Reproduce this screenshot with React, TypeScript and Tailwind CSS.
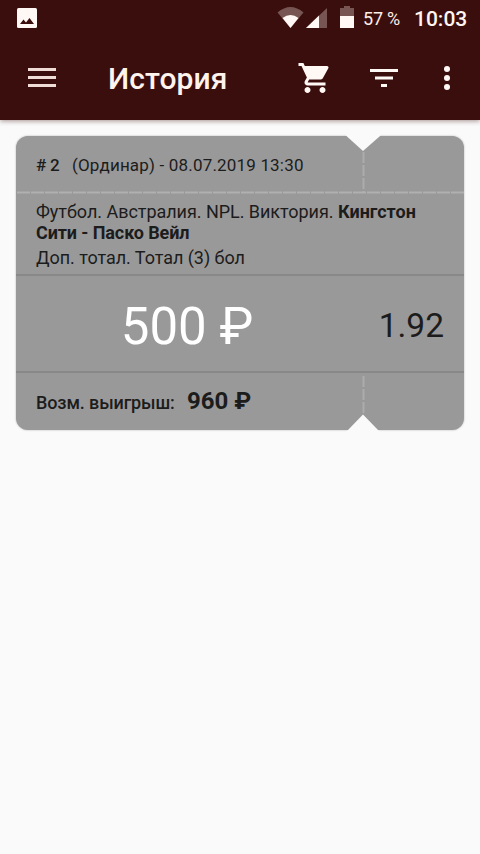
import type { ReactNode } from 'react'

const StatusBar = () => {
  return (
    <div className="flex h-9 items-center text-white">
      <svg className="ml-[17px] h-5 w-5" viewBox="0 0 20 20">
        <rect width="20" height="20" rx="1.5" fill="#fff8f5" />
        <path d="M3 16l3.5-4.5 2.5 3L12.5 10 17 16z" fill="#3a0e0c" />
      </svg>

      {/* Wifi, signal and battery */}
      <svg className="ml-[240px] h-6 w-20" viewBox="277 6 80 24">
        <path d="M277.5 12.5Q290.5 1.5 303.5 12.5L290.5 28z" fill="#765553" />
        <path d="M282.5 18Q290.5 12 298.5 18L290.5 28z" fill="#fff8f5" />
        <path d="M327 8v20h-21z" fill="#765553" />
        <path d="M319 15.6V28h-13z" fill="#fff8f5" />
        <path d="M344 6h6v2h4v9h-14V8h4z" fill="#765553" />
        <path d="M340 16h14v12h-14z" fill="#fff8f5" />
      </svg>

      <span className="ml-1.5 w-[51px] pt-0.5 text-[18px] leading-9 tracking-[-0.2px] whitespace-nowrap text-[#fceeea]">57 %</span>
      <span className="pt-0.5 text-[21px] leading-9 font-medium whitespace-nowrap text-[#fff6f3]">10:03</span>
    </div>
  )
}

const AppBar = () => {
  return (
    <div className="flex h-[84px] items-center">
      <button className="ml-7 flex w-7 flex-col gap-[5px] pb-px" aria-label="Menu">
        <span className="h-[3px] w-7 bg-[#efdcd6]" />
        <span className="h-[3px] w-7 bg-[#efdcd6]" />
        <span className="h-[3px] w-7 bg-[#efdcd6]" />
      </button>
      <h1 className="ml-[52px] w-[189px] pt-0.5 text-[30px] leading-9 font-medium tracking-[0.1px] whitespace-nowrap text-[#fff3ee]">История</h1>
      <svg className="h-9 w-9" viewBox="0 0 24 24" fill="#fff8f5">
        <path d="M7 18c-1.1 0-1.99.9-1.99 2S5.9 22 7 22s2-.9 2-2-.9-2-2-2zM1 2v2h2l3.6 7.59-1.35 2.45c-.16.28-.25.61-.25.96 0 1.1.9 2 2 2h12v-2H7.42c-.14 0-.25-.11-.25-.25l.03-.12.9-1.63h7.45c.75 0 1.41-.41 1.75-1.03l3.58-6.49A1 1 0 0 0 20 4H5.21l-.94-2H1zm16 16c-1.1 0-1.99.9-1.99 2s.89 2 1.99 2 2-.9 2-2-.9-2-2-2z" />
      </svg>
      <svg className="ml-[37px] h-[18px] w-7" viewBox="0 0 28 18" fill="#fff8f5">
        <path d="M0 0h28v3H0zM5 7.5h18v3H5zM11 15h6v3h-6z" />
      </svg>
      <div className="ml-[46px] flex flex-col gap-[3px]">
        <span className="size-1.5 rounded-full bg-[#fff8f5]" />
        <span className="size-1.5 rounded-full bg-[#fff8f5]" />
        <span className="size-1.5 rounded-full bg-[#fff8f5]" />
      </div>
    </div>
  )
}

const Ticket = ({ children }: { children: ReactNode }) => {
  return (
    <div className="relative mx-4 mt-4 h-[294px] rounded-[12px] bg-[#999999] text-[#1c1c1c] shadow-[0_0_2px_#aaaaaa]">
      {children}

      {/* Notches and tear line */}
      <svg className="absolute -top-1 left-0 h-[302px] w-[448px]" viewBox="0 -4 448 302">
        <path d="M327 -4L331 0.5 347 15 363.5 0.5 367 -4z" fill="#fafafa" />
        <path d="M327 298L332 294 347 278.5 362 294 367 298z" fill="#fafafa" />
        <path d="M347.5 16V56M347.5 240V278" stroke="#acacac" strokeWidth="2" strokeDasharray="11 2" />
        <path d="M1 56.5H448" stroke="#b0b0b0" strokeWidth="2" strokeDasharray="13 1" />
      </svg>
    </div>
  )
}

const App = () => {
  return (
    <div className="h-[854px] w-[480px] overflow-hidden bg-[#fafafa] font-[Roboto,sans-serif]">
      <header className="h-[120px] bg-[#3a0e0c] shadow-[0_1px_5px_rgba(58,14,12,0.45)]">
        <StatusBar />
        <AppBar />
      </header>

      <Ticket>
        <div className="flex h-14 items-center px-5 pt-1 text-[17px] whitespace-nowrap">
          <span className="w-9 font-medium tracking-[-0.2px]"># 2</span>
          <span className="tracking-[0.18px]">(Ординар) - 08.07.2019 13:30</span>
        </div>

        <div className="h-[84px] border-b-2 border-[#888888] px-5 pt-[9px] text-[18px] leading-[21px] tracking-[-0.04px] whitespace-nowrap">
          <p>
            Футбол. Австралия. NPL. Виктория. <b className="tracking-normal">Кингстон</b>
            <br />
            <b className="tracking-[-0.1px]">Сити - Паско Вейл</b>
          </p>
          <p className="mt-1">Доп. тотал. Тотал (3) бол</p>
        </div>

        <div className="flex h-[97px] items-center border-b-2 border-[#888888] whitespace-nowrap">
          <span className="w-[342px] pt-2 text-center text-[51px] text-white">500 ₽</span>
          <span className="ml-auto pt-1.5 pr-5 text-[33.5px]">1.92</span>
        </div>

        <div className="flex items-baseline px-5 pt-3 whitespace-nowrap">
          <span className="w-[151px] text-[18px] font-medium tracking-[-0.12px]">Возм. выигрыш:</span>
          <span className="text-[24px] leading-8 font-bold">960 ₽</span>
        </div>
      </Ticket>
    </div>
  )
}

export default App
